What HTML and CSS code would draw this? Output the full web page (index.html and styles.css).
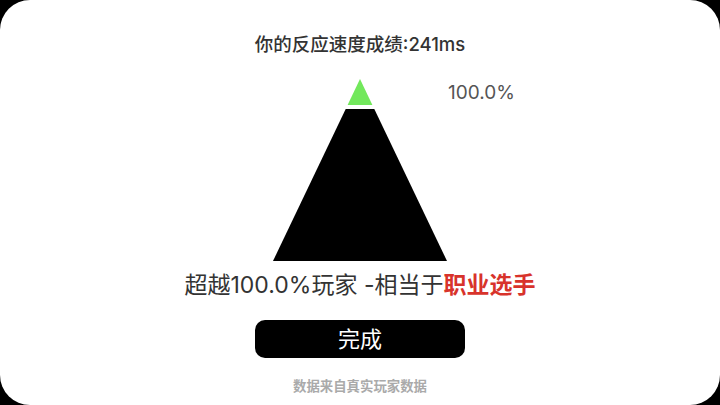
FILE: index.html
```html
<!DOCTYPE html>
<html lang="zh-CN">
<head>
    <meta charset="UTF-8">
    <meta name="viewport" content="width=device-width, initial-scale=1.0">
    <title>反应速度成绩</title>
    <link rel="stylesheet" href="styles.css">
</head>
<body>
    <div class="card">
        <!--成绩标题-->
        <h1 class="title">你的反应速度成绩:241ms</h1>
        <!--金字塔-->
        <div class="chart">
            <svg class="pyramid" width="174" height="182" viewBox="0 0 174 182">
                <polygon points="87,0 99.4,26 74.6,26" fill="#72e85c"/>
                <polygon points="72.7,30 101.3,30 174,182 0,182" fill="#000"/>
            </svg>
            <span class="percent">100.0%</span>
        </div>
        <!--结果-->
        <p class="result">超越100.0%玩家&nbsp;-相当于<b>职业选手</b></p>
        <div class="btn">完成</div>
        <p class="note">数据来自真实玩家数据</p>
    </div>
</body>
</html>
```

FILE: styles.css
```css
*{
    margin: 0;
    padding: 0;
}
html,body{
    width: 100%;
    height: 100%;
    background-color: #000;
    overflow: hidden;
}
body{
    font-family: Inter, "Noto Sans CJK SC", sans-serif;
}
.card{
    width: 720px;
    height: 405px;
    background-color: #fff;
    border-radius: 30px;
    display: flex;
    flex-direction: column;
    align-items: center;
    padding-top: 32px;
    box-sizing: border-box;
}
.title{
    font-size: 18.5px;
    line-height: 24px;
    font-weight: 500;
    color: #333;
}
.chart{
    position: relative;
    margin-top: 23px;
    width: 174px;
    height: 182px;
}
.pyramid{
    display: block;
}
.percent{
    position: absolute;
    left: 175px;
    top: 2px;
    font-size: 19px;
    line-height: 24px;
    color: #555;
    white-space: nowrap;
}
.result{
    margin-top: 9px;
    font-size: 23px;
    line-height: 30px;
    color: #333;
}
.result b{
    color: #d8332b;
    font-weight: 700;
}
.btn{
    margin-top: 20px;
    width: 210px;
    height: 38px;
    line-height: 38px;
    background-color: #000;
    border-radius: 10px;
    color: #fff;
    font-size: 22px;
    text-align: center;
}
.note{
    margin-top: 19px;
    font-size: 13.4px;
    line-height: 18px;
    color: #aaa;
    font-weight: 700;
}
```
